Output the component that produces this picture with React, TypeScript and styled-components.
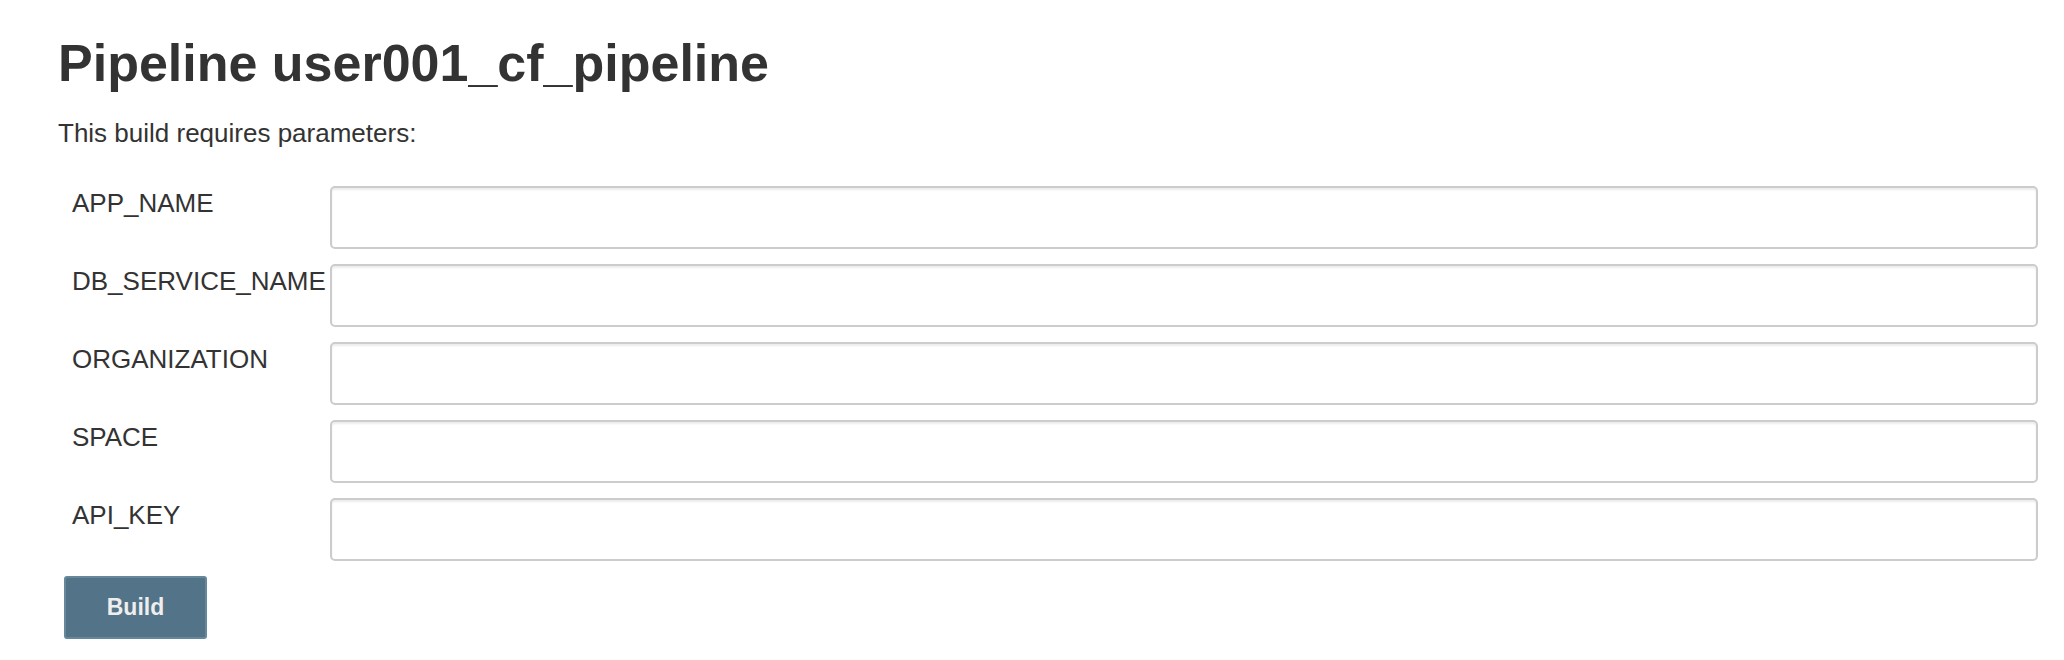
import React from "react";
import styled, { createGlobalStyle } from "styled-components";

const GlobalStyle = createGlobalStyle`
  html, body {
    margin: 0;
    padding: 0;
    background: #ffffff;
  }
  body {
    font-family: "Liberation Sans", Arial, Helvetica, sans-serif;
    color: #333333;
  }
`;

const Page = styled.main`
  box-sizing: border-box;
  width: 2064px;
  padding: 33px 26px 0 58px;
`;

const Title = styled.h1`
  margin: 0 0 25px;
  font-size: 52px;
  line-height: 60px;
  font-weight: 700;
  color: #333333;
`;

const Intro = styled.p`
  margin: 0 0 38px;
  font-size: 26px;
  line-height: 30px;
  color: #333333;
`;

const ParamGrid = styled.div`
  display: grid;
  grid-template-columns: 272px 1fr;
  row-gap: 15px;
`;

const ParamName = styled.label`
  padding: 2px 0 0 14px;
  font-size: 26px;
  line-height: 30px;
  white-space: nowrap;
  color: #333333;
`;

const ParamInput = styled.input`
  box-sizing: border-box;
  width: 100%;
  height: 63px;
  margin: 0;
  padding: 0 12px;
  border: 2px solid #cccccc;
  border-radius: 5px;
  background: #ffffff;
  box-shadow: inset 0 2px 2px rgba(0, 0, 0, 0.075);
  font-family: "Liberation Sans", Arial, sans-serif;
  font-size: 26px;
  outline: none;
`;

const Actions = styled.div`
  display: flex;
  padding: 15px 0 0 6px;
`;

const BuildButton = styled.button`
  box-sizing: border-box;
  width: 143px;
  height: 63px;
  padding: 0;
  border: 2px solid #67879b;
  border-radius: 3px;
  background: #537388;
  color: #eeeeee;
  font-family: "Liberation Sans", Arial, sans-serif;
  font-size: 23px;
  font-weight: 700;
  cursor: pointer;
`;

const params = ["APP_NAME", "DB_SERVICE_NAME", "ORGANIZATION", "SPACE", "API_KEY"];

export default function App() {
  return (
    <>
      <GlobalStyle />
      <Page>
        <Title>Pipeline user001_cf_pipeline</Title>
        <Intro>This build requires parameters:</Intro>
        <ParamGrid>
          {params.map((p) => (
            <React.Fragment key={p}>
              <ParamName htmlFor={p}>{p}</ParamName>
              <ParamInput id={p} name={p} type="text" />
            </React.Fragment>
          ))}
        </ParamGrid>
        <Actions>
          <BuildButton type="button">Build</BuildButton>
        </Actions>
      </Page>
    </>
  );
}
